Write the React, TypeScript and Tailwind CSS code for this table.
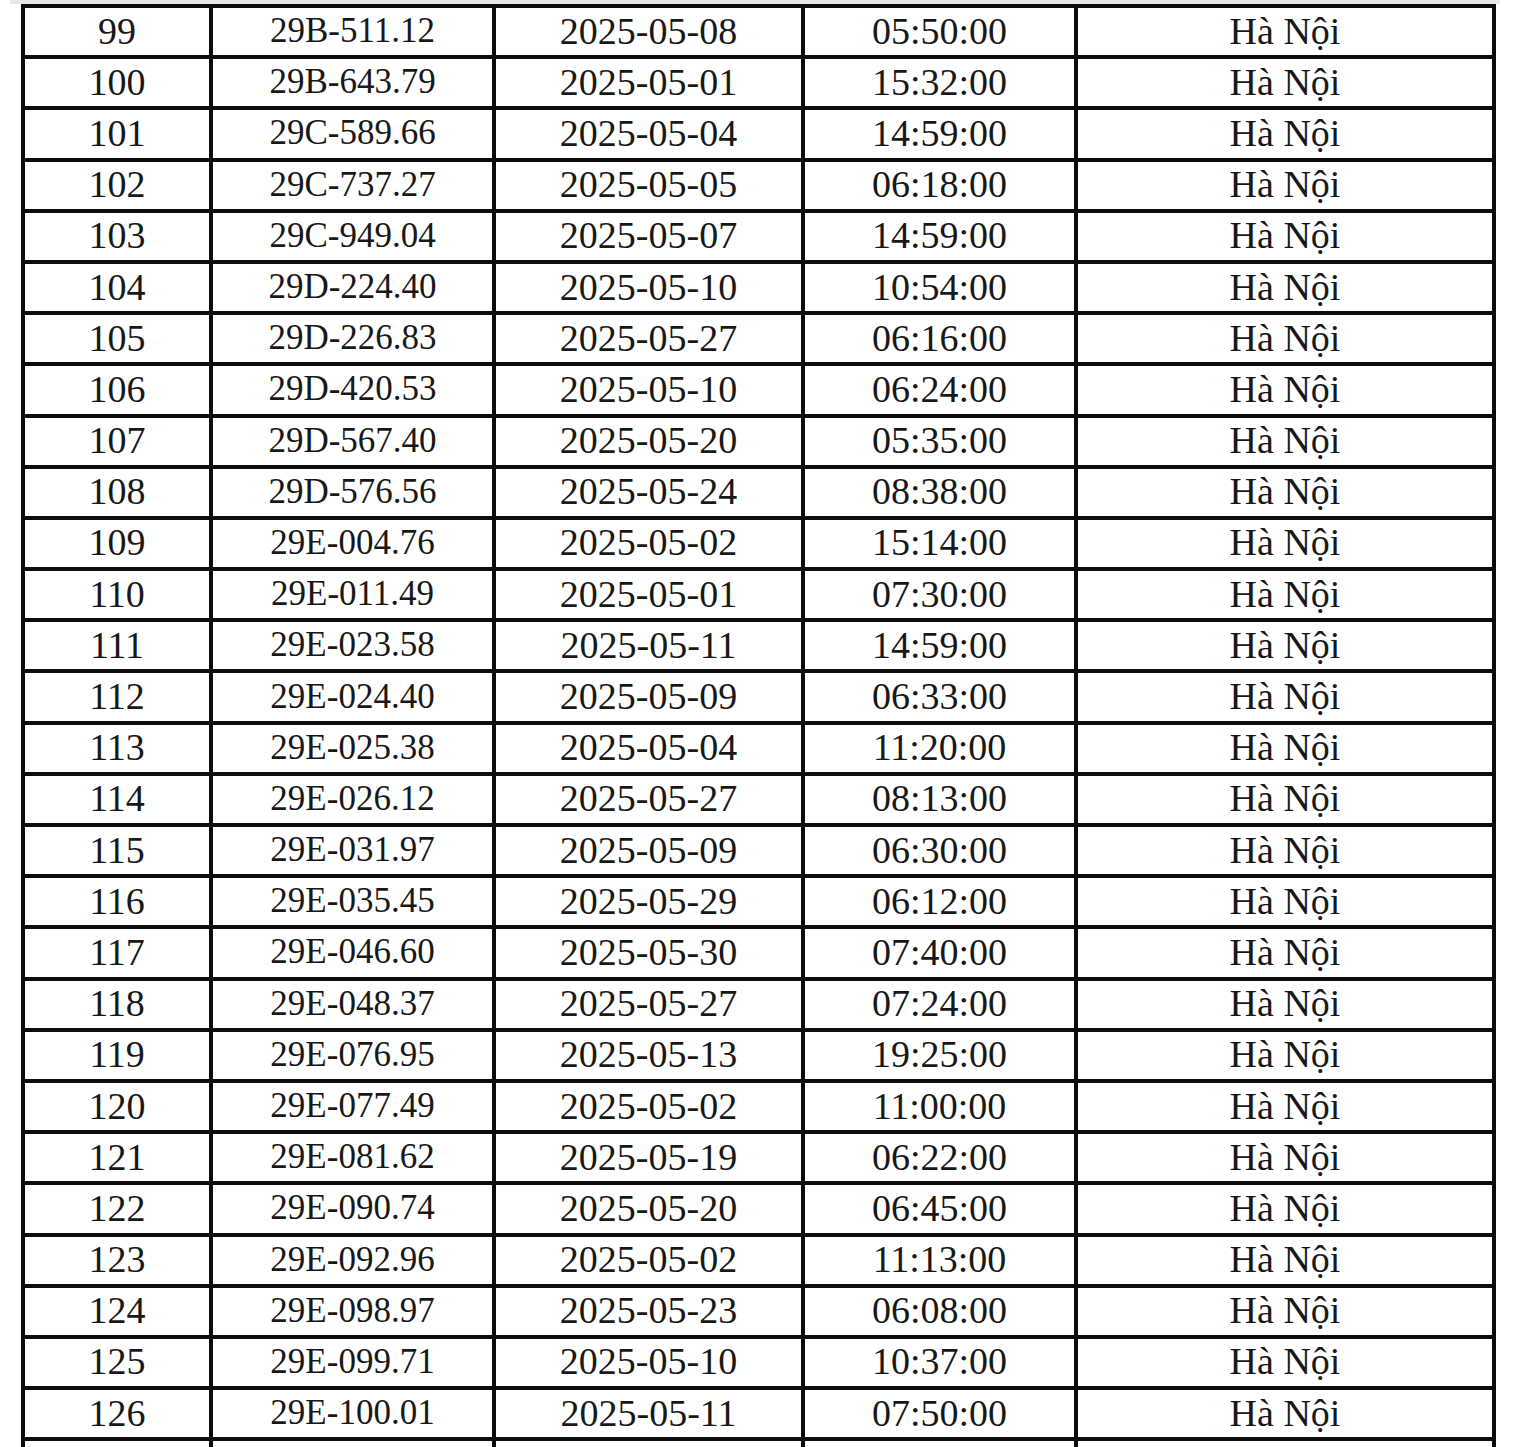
const rows = [
  ["99", "29B-511.12", "2025-05-08", "05:50:00"],
  ["100", "29B-643.79", "2025-05-01", "15:32:00"],
  ["101", "29C-589.66", "2025-05-04", "14:59:00"],
  ["102", "29C-737.27", "2025-05-05", "06:18:00"],
  ["103", "29C-949.04", "2025-05-07", "14:59:00"],
  ["104", "29D-224.40", "2025-05-10", "10:54:00"],
  ["105", "29D-226.83", "2025-05-27", "06:16:00"],
  ["106", "29D-420.53", "2025-05-10", "06:24:00"],
  ["107", "29D-567.40", "2025-05-20", "05:35:00"],
  ["108", "29D-576.56", "2025-05-24", "08:38:00"],
  ["109", "29E-004.76", "2025-05-02", "15:14:00"],
  ["110", "29E-011.49", "2025-05-01", "07:30:00"],
  ["111", "29E-023.58", "2025-05-11", "14:59:00"],
  ["112", "29E-024.40", "2025-05-09", "06:33:00"],
  ["113", "29E-025.38", "2025-05-04", "11:20:00"],
  ["114", "29E-026.12", "2025-05-27", "08:13:00"],
  ["115", "29E-031.97", "2025-05-09", "06:30:00"],
  ["116", "29E-035.45", "2025-05-29", "06:12:00"],
  ["117", "29E-046.60", "2025-05-30", "07:40:00"],
  ["118", "29E-048.37", "2025-05-27", "07:24:00"],
  ["119", "29E-076.95", "2025-05-13", "19:25:00"],
  ["120", "29E-077.49", "2025-05-02", "11:00:00"],
  ["121", "29E-081.62", "2025-05-19", "06:22:00"],
  ["122", "29E-090.74", "2025-05-20", "06:45:00"],
  ["123", "29E-092.96", "2025-05-02", "11:13:00"],
  ["124", "29E-098.97", "2025-05-23", "06:08:00"],
  ["125", "29E-099.71", "2025-05-10", "10:37:00"],
  ["126", "29E-100.01", "2025-05-11", "07:50:00"],
];

const cell =
  "flex items-center justify-center border-r-4 border-b-4 border-[#0d0d0d] pb-[2px] leading-none";

const App = () => {
  return (
    <div className="min-h-[1447px] bg-white font-['Liberation_Serif',_'Times_New_Roman',_serif] text-[#181818]">
      {/* faint edge of the previous page */}
      <div className="ml-[10px] h-[4px] w-[1490px] bg-[#e8e8e8]" />

      <div className="ml-[21px] w-[1475px] border-t-4 border-l-4 border-[#0d0d0d]">
        {rows.map((r, i) => (
          <div
            key={i}
            className="grid h-[51.2px] grid-cols-[188px_283px_309px_273px_418px]"
          >
            <div className={`${cell} text-[38px]`}>{r[0]}</div>
            <div className={`${cell} text-[35px]`}>{r[1]}</div>
            <div className={`${cell} text-[38px]`}>{r[2]}</div>
            <div className={`${cell} text-[38px]`}>{r[3]}</div>
            <div className={`${cell} text-[38px]`}>Hà Nội</div>
          </div>
        ))}

        {/* next row, cut off by the bottom of the page */}
        <div className="grid h-[51.2px] grid-cols-[188px_283px_309px_273px_418px]">
          <div className={cell} />
          <div className={cell} />
          <div className={cell} />
          <div className={cell} />
          <div className={cell} />
        </div>
      </div>
    </div>
  );
};

export default App;
